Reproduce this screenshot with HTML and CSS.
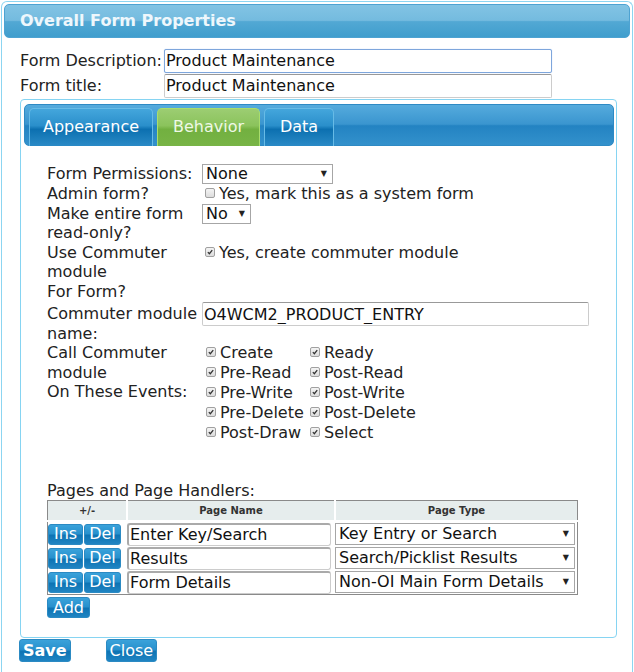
FILE: index.html
```html
<!DOCTYPE html>
<html lang="en">
<head>
    <meta charset="UTF-8">
    <title>Overall Form Properties</title>
    <link rel="stylesheet" href="styles.css">
</head>
<body>
    <div class="dialog">
        <div class="dialog-title">Overall Form Properties</div>

        <div class="field-row first">
            <label class="field-label">Form Description:</label>
            <input type="text" class="text-input focused" value="Product Maintenance">
        </div>
        <div class="field-row">
            <label class="field-label">Form title:</label>
            <input type="text" class="text-input" value="Product Maintenance">
        </div>

        <div class="panel">
            <div class="tabbar">
                <div class="tab">Appearance</div>
                <div class="tab active">Behavior</div>
                <div class="tab">Data</div>
            </div>

            <div class="tab-body">
                <div class="prop-row">
                    <div class="prop-label">Form Permissions:</div>
                    <div class="prop-value">
                        <span class="select wide">None</span>
                    </div>
                </div>
                <div class="prop-row">
                    <div class="prop-label">Admin form?</div>
                    <div class="prop-value">
                        <span class="cb"></span>Yes, mark this as a system form
                    </div>
                </div>
                <div class="prop-row">
                    <div class="prop-label">Make entire form read-only?</div>
                    <div class="prop-value">
                        <span class="select small">No</span>
                    </div>
                </div>
                <div class="prop-row">
                    <div class="prop-label">Use Commuter module<br>For Form?</div>
                    <div class="prop-value">
                        <span class="cb on"><svg viewBox="0 0 10 10"><path d="M2.3 5.2 L4.2 7.2 L7.8 2.6" /></svg></span>Yes, create commuter module
                    </div>
                </div>
                <div class="prop-row name-row">
                    <div class="prop-label">Commuter module<br>name:</div>
                    <div class="prop-value">
                        <input type="text" class="text-input module-input" value="O4WCM2_PRODUCT_ENTRY">
                    </div>
                </div>
                <div class="prop-row">
                    <div class="prop-label">Call Commuter module<br>On These Events:</div>
                    <div class="prop-value events">
                        <span class="ev"><span class="cb on"><svg viewBox="0 0 10 10"><path d="M2.3 5.2 L4.2 7.2 L7.8 2.6" /></svg></span>Create</span>
                        <span class="ev"><span class="cb on"><svg viewBox="0 0 10 10"><path d="M2.3 5.2 L4.2 7.2 L7.8 2.6" /></svg></span>Ready</span>
                        <span class="ev"><span class="cb on"><svg viewBox="0 0 10 10"><path d="M2.3 5.2 L4.2 7.2 L7.8 2.6" /></svg></span>Pre-Read</span>
                        <span class="ev"><span class="cb on"><svg viewBox="0 0 10 10"><path d="M2.3 5.2 L4.2 7.2 L7.8 2.6" /></svg></span>Post-Read</span>
                        <span class="ev"><span class="cb on"><svg viewBox="0 0 10 10"><path d="M2.3 5.2 L4.2 7.2 L7.8 2.6" /></svg></span>Pre-Write</span>
                        <span class="ev"><span class="cb on"><svg viewBox="0 0 10 10"><path d="M2.3 5.2 L4.2 7.2 L7.8 2.6" /></svg></span>Post-Write</span>
                        <span class="ev"><span class="cb on"><svg viewBox="0 0 10 10"><path d="M2.3 5.2 L4.2 7.2 L7.8 2.6" /></svg></span>Pre-Delete</span>
                        <span class="ev"><span class="cb on"><svg viewBox="0 0 10 10"><path d="M2.3 5.2 L4.2 7.2 L7.8 2.6" /></svg></span>Post-Delete</span>
                        <span class="ev"><span class="cb on"><svg viewBox="0 0 10 10"><path d="M2.3 5.2 L4.2 7.2 L7.8 2.6" /></svg></span>Post-Draw</span>
                        <span class="ev"><span class="cb on"><svg viewBox="0 0 10 10"><path d="M2.3 5.2 L4.2 7.2 L7.8 2.6" /></svg></span>Select</span>
                    </div>
                </div>

                <div class="pages-title">Pages and Page Handlers:</div>
                <table class="pages">
                    <thead>
                        <tr>
                            <th class="col-btn">+/-</th>
                            <th class="col-name">Page Name</th>
                            <th class="col-type">Page Type</th>
                        </tr>
                    </thead>
                    <tbody>
                        <tr>
                            <td><button class="btn">Ins</button><button class="btn">Del</button></td>
                            <td><input type="text" class="cell-input" value="Enter Key/Search"></td>
                            <td><span class="select cell">Key Entry or Search</span></td>
                        </tr>
                        <tr>
                            <td><button class="btn">Ins</button><button class="btn">Del</button></td>
                            <td><input type="text" class="cell-input" value="Results"></td>
                            <td><span class="select cell">Search/Picklist Results</span></td>
                        </tr>
                        <tr>
                            <td><button class="btn">Ins</button><button class="btn">Del</button></td>
                            <td><input type="text" class="cell-input" value="Form Details"></td>
                            <td><span class="select cell">Non-OI Main Form Details</span></td>
                        </tr>
                    </tbody>
                </table>
                <button class="btn add">Add</button>
            </div>
        </div>

        <div class="actions">
            <button class="btn big save">Save</button>
            <button class="btn big">Close</button>
        </div>
    </div>
</body>
</html>
```

FILE: styles.css
```css
body {
    margin: 0;
    font-family: "DejaVu Sans", Verdana, sans-serif;
    font-size: 16px;
    color: #222;
    background: #fff;
}
.dialog {
    margin: 1px 1px 0 1px;
    border: 1px solid #8cd5f1;
    border-bottom: none;
    border-radius: 6px 6px 0 0;
    padding: 2px 2px 0 2px;
    height: 671px;
    box-sizing: border-box;
}
.dialog-title {
    height: 32px;
    line-height: 32px;
    border: 1px solid #4ea3d2;
    border-radius: 5px;
    padding-left: 15px;
    background: linear-gradient(#82c4e4 0%, #74bbdf 48%, #52a8d4 52%, #409ecd 100%);
    color: #eef7fc;
    font-weight: bold;
    font-size: 16px;
}
.field-row {
    display: flex;
    align-items: center;
    padding-left: 16px;
    height: 25px;
}
.field-row.first {
    margin-top: 10px;
}
.field-label {
    width: 144px;
    color: #222;
}
.text-input {
    font-family: "DejaVu Sans", Verdana, sans-serif;
    font-size: 16px;
    color: #111;
    box-sizing: border-box;
    height: 24px;
    width: 388px;
    padding: 0 1px;
    border: 1px solid #ccc;
    border-top-color: #999;
    border-radius: 2px;
    background: #fff;
}
.text-input.focused {
    border: 1px solid #7ea6dc;
    box-shadow: 0 0 1px #9fc3ef;
}
.panel {
    margin: 1px 13px 0 16px;
    border: 1px solid #86d4f2;
    border-radius: 4px;
    height: 539px;
    padding: 4px 2px 0 3px;
    box-sizing: border-box;
}
.tabbar {
    display: flex;
    gap: 4px;
    height: 42px;
    box-sizing: border-box;
    padding: 3px 0 0 4px;
    border: 1px solid #2e8ac4;
    border-radius: 5px;
    background: linear-gradient(#55abdd 0%, #3a95cf 48%, #2383c2 52%, #3391cc 100%);
}
.tab {
    height: 38px;
    box-sizing: border-box;
    line-height: 36px;
    color: #fff;
    font-size: 16px;
    text-align: center;
    border: 1px solid #67bbe6;
    border-bottom: none;
    border-radius: 5px 5px 0 0;
    background: linear-gradient(#44a6dc 0%, #2a8fcb 45%, #0c70b0 55%, #2a8ac6 100%);
}
.tab:first-child {
    width: 124px;
}
.tab.active {
    width: 103px;
    color: #eef8e6;
    border-color: #a9dd6c;
    background: linear-gradient(#9ccd72 0%, #8bc35c 45%, #72b040 55%, #78b446 100%);
}
.tab:last-child {
    width: 70px;
}
.tab-body {
    padding: 18px 0 0 23px;
}
.prop-row {
    display: flex;
    line-height: 19.5px;
}
.prop-label {
    width: 155px;
    flex: none;
}
.prop-value {
    flex: 1;
}
.select {
    position: relative;
    display: inline-block;
    box-sizing: border-box;
    height: 20px;
    line-height: 18px;
    padding-left: 3px;
    border: 1px solid #a6a6a6;
    background: #fff;
    color: #111;
    vertical-align: top;
}
.select::after {
    content: "\25BC";
    position: absolute;
    right: 5px;
    top: 0;
    font-size: 8px;
    color: #222;
}
.select.wide {
    width: 131px;
}
.select.small {
    width: 49px;
}
.cb {
    display: inline-block;
    box-sizing: border-box;
    width: 10px;
    height: 10px;
    margin: 0 4px 0 3px;
    border: 1px solid #a0a0a0;
    border-radius: 2px;
    background: linear-gradient(#f4f4f4, #dcdcdc);
    vertical-align: 1px;
}
.cb svg {
    display: block;
    width: 8px;
    height: 8px;
}
.cb svg path {
    fill: none;
    stroke: #333;
    stroke-width: 1.6;
}
.name-row {
    margin-top: 1px;
}
.name-row .prop-label {
    padding-top: 2px;
}
.module-input {
    width: 387px;
    height: 24px;
}
.events {
    display: grid;
    grid-template-columns: 104px auto;
    line-height: 20px;
    padding-left: 1px;
}
.pages-title {
    margin-top: 39px;
    line-height: 18px;
}
.pages {
    border-collapse: collapse;
    border: 1px solid #8a8a8a;
    width: 531px;
    table-layout: fixed;
}
.pages th {
    background: #e6eded;
    font-size: 10px;
    font-weight: bold;
    color: #333;
    height: 19px;
    padding: 0;
    border-left: 2px solid #fff;
    border-bottom: 2px solid #fff;
}
.pages th:first-child {
    border-left: none;
}
.pages td {
    padding: 0;
    height: 24px;
    white-space: nowrap;
}
.col-btn {
    width: 78px;
}
.col-name {
    width: 206px;
}
.btn {
    font-family: "DejaVu Sans", Verdana, sans-serif;
    font-size: 16px;
    color: #fff;
    height: 21px;
    padding: 0 5px;
    border: 1px solid #2b8ac3;
    border-radius: 3px;
    background: linear-gradient(#3aa2da 0%, #2891cd 45%, #0e74b4 55%, #1f84c2 100%);
    margin-right: 1px;
    vertical-align: middle;
    line-height: 18px;
}
.pages td:first-child .btn:last-child {
    padding: 0 4px;
}
.cell-input {
    font-family: "DejaVu Sans", Verdana, sans-serif;
    font-size: 16px;
    color: #111;
    box-sizing: border-box;
    width: 204px;
    height: 23px;
    padding: 0 1px;
    border: 1px solid #ccc;
    border-top: 2px solid #aaa;
    border-left: 2px solid #aaa;
    border-radius: 3px;
    vertical-align: middle;
}
.select.cell {
    width: 240px;
    height: 22px;
    line-height: 20px;
    vertical-align: middle;
}
.add {
    margin-top: 2px;
}
.actions {
    display: flex;
    gap: 34px;
    padding: 1px 0 0 15px;
}
.btn.big {
    height: 23px;
    font-size: 16px;
    padding: 0 3px;
}
.btn.save {
    font-weight: bold;
}
```
